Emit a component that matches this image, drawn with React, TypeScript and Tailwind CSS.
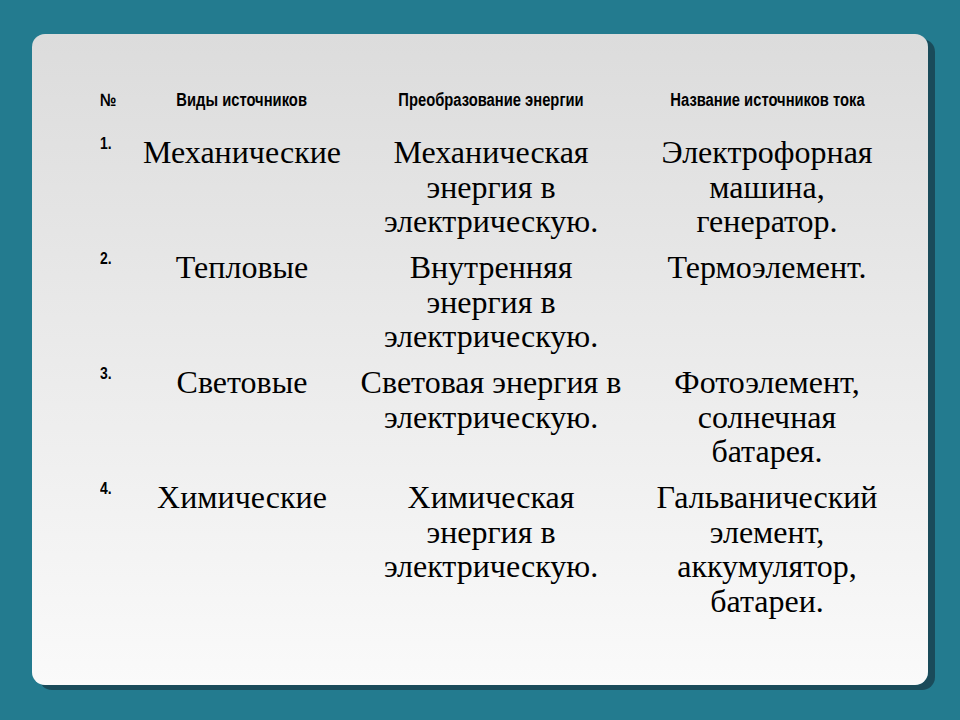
import React from "react";

type Row = {
	num: string;
	kind: string;
	conversion: string[];
	sources: string[];
};

const rows: Row[] = [
	{
		num: "1.",
		kind: "Механические",
		conversion: ["Механическая", "энергия в", "электрическую."],
		sources: ["Электрофорная", "машина,", "генератор."],
	},
	{
		num: "2.",
		kind: "Тепловые",
		conversion: ["Внутренняя", "энергия в", "электрическую."],
		sources: ["Термоэлемент."],
	},
	{
		num: "3.",
		kind: "Световые",
		conversion: ["Световая энергия в", "электрическую."],
		sources: ["Фотоэлемент,", "солнечная", "батарея."],
	},
	{
		num: "4.",
		kind: "Химические",
		conversion: ["Химическая", "энергия в", "электрическую."],
		sources: ["Гальванический", "элемент,", "аккумулятор,", "батареи."],
	},
];

const headFont = "font-['Liberation_Sans',Arial,sans-serif]";
const bodyFont = "font-['Liberation_Serif','Times_New_Roman',serif]";

// narrow bold heading text, squeezed horizontally like Arial Narrow
const Narrow = ({ children, left }: { children: React.ReactNode; left?: boolean }) => (
	<span
		className={`inline-block scale-x-[0.82] whitespace-nowrap ${left ? "origin-left" : "origin-center"}`}
	>
		{children}
	</span>
);

const Lines = ({ lines }: { lines: string[] }) => (
	<>
		{lines.map((line) => (
			<div key={line}>{line}</div>
		))}
	</>
);

export default function App() {
	return (
		<div className="h-[720px] w-[960px] bg-[#237b8f] pl-[32px] pt-[34px]">
			<div className="h-[651px] w-[896px] rounded-[13px] bg-gradient-to-b from-[#dcdcdc] to-[#fafafa] pl-[68px] pr-[22px] pt-[56px] text-black shadow-[7px_5px_0_0_#1a4b5a]">
				<div
					className={`grid grid-cols-[30px_224px_274px_278px] ${headFont} text-[18px] font-bold leading-[20px]`}
				>
					<div>
						<Narrow left>№</Narrow>
					</div>
					<div className="text-center">
						<Narrow>Виды источников</Narrow>
					</div>
					<div className="text-center">
						<Narrow>Преобразование энергии</Narrow>
					</div>
					<div className="text-center">
						<Narrow>Название источников тока</Narrow>
					</div>
				</div>

				<div className="mt-[25px] flex flex-col gap-[11.5px]">
					{rows.map((row) => (
						<div
							key={row.num}
							className={`grid grid-cols-[30px_224px_274px_278px] ${bodyFont} text-[32px] leading-[34.5px]`}
						>
							<div className={`${headFont} text-[17px] font-bold leading-[17px]`}>
								<Narrow left>{row.num}</Narrow>
							</div>
							<div className="text-center">{row.kind}</div>
							<div className="text-center">
								<Lines lines={row.conversion} />
							</div>
							<div className="text-center">
								<Lines lines={row.sources} />
							</div>
						</div>
					))}
				</div>
			</div>
		</div>
	);
}
